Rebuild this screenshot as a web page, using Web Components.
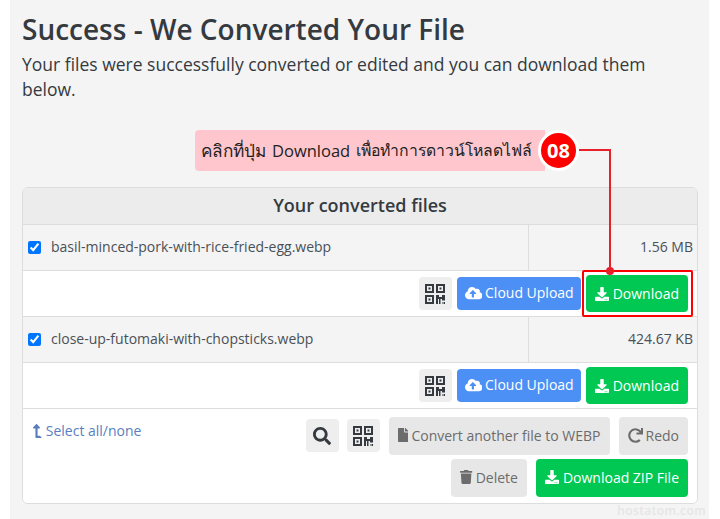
<!DOCTYPE html>
<html lang="en">
<head>
<meta charset="utf-8">
<title>Success - We Converted Your File</title>
<style>
html,body{margin:0;padding:0;background:#fff;}
body{font-family:"Open Sans","Noto Sans",sans-serif;color:#343a40;}
x-callout .th1{font-size:17.2px}
x-callout .en{font-weight:400;font-size:16.5px;margin:0 6px}
x-callout .th2{font-size:15.8px}
</style>
</head>
<body>
<x-page>
  <h-title slot="head" heading="Success - We Converted Your File">Your files were successfully converted or edited and you can download them below.</h-title>
  <x-callout slot="head" number="08"><span class="th1">คลิกที่ปุ่ม</span><span class="en">Download</span><span class="th2">เพื่อทำการดาวน์โหลดไฟล์</span></x-callout>
  <x-card heading="Your converted files">
    <x-file name="basil-minced-pork-with-rice-fried-egg.webp" size="1.56 MB"></x-file>
    <x-file name="close-up-futomaki-with-chopsticks.webp" size="424.67 KB"></x-file>
    <x-card-foot></x-card-foot>
  </x-card>
</x-page>
<script>
const ICONS={
 download:['0 0 512 512','M216 0h80c13.3 0 24 10.7 24 24v168h87.7c17.8 0 26.7 21.5 14.1 34.1L269.7 378.3c-7.5 7.5-19.8 7.5-27.3 0L90.1 226.1c-12.6-12.6-3.7-34.1 14.1-34.1H192V24c0-13.3 10.7-24 24-24zm296 376v112c0 13.3-10.7 24-24 24H24c-13.3 0-24-10.7-24-24V376c0-13.3 10.7-24 24-24h146.7l49 49c20.1 20.1 52.5 20.1 72.6 0l49-49H488c13.3 0 24 10.7 24 24zm-124 88c0-11-9-20-20-20s-20 9-20 20 9 20 20 20 20-9 20-20zm64 0c0-11-9-20-20-20s-20 9-20 20 9 20 20 20 20-9 20-20z'],
 cloud:['0 0 640 512','M537.6 226.6c4.1-10.7 6.4-22.4 6.4-34.6 0-53-43-96-96-96-19.7 0-38.1 6-53.3 16.2C367 64.2 315.3 32 256 32c-88.4 0-160 71.6-160 160 0 2.7.1 5.4.2 8.1C40.2 219.8 0 273.2 0 336c0 79.5 64.5 144 144 144h368c70.7 0 128-57.3 128-128 0-61.9-44-113.6-102.4-125.4zM393.4 288H328v112c0 8.8-7.2 16-16 16h-48c-8.8 0-16-7.2-16-16V288h-65.4c-14.3 0-21.4-17.2-11.3-27.3l105.4-105.4c6.2-6.2 16.4-6.2 22.6 0l105.4 105.4c10.1 10.1 2.9 27.3-11.3 27.3z'],
 search:['0 0 512 512','M505 442.7L405.3 343c-4.5-4.5-10.6-7-17-7H372c27.6-35.3 44-79.7 44-128C416 93.1 322.9 0 208 0S0 93.1 0 208s93.1 208 208 208c48.3 0 92.7-16.4 128-44v16.3c0 6.4 2.5 12.5 7 17l99.7 99.7c9.4 9.4 24.6 9.4 33.9 0l28.3-28.3c9.4-9.4 9.4-24.6.1-34zM208 336c-70.7 0-128-57.2-128-128 0-70.7 57.2-128 128-128 70.7 0 128 57.2 128 128 0 70.7-57.2 128-128 128z'],
 file:['0 0 384 512','M224 136V0H24C10.7 0 0 10.7 0 24v464c0 13.3 10.7 24 24 24h336c13.3 0 24-10.7 24-24V160H248c-13.2 0-24-10.8-24-24zm160-14.1v6.1H256V0h6.1c6.4 0 12.5 2.5 17 7l97.9 98c4.5 4.5 7 10.6 7 16.9z'],
 trash:['0 0 448 512','M432 32H312l-9.4-18.7A24 24 0 0 0 281.1 0H166.8a23.72 23.72 0 0 0-21.4 13.3L136 32H16A16 16 0 0 0 0 48v32a16 16 0 0 0 16 16h416a16 16 0 0 0 16-16V48a16 16 0 0 0-16-16zM53.2 467a48 48 0 0 0 47.9 45h245.8a48 48 0 0 0 47.9-45L416 128H32z'],
 redo:['0 0 512 512','M500.33 0h-47.41a12 12 0 0 0-12 12.57l4 82.76A247.42 247.42 0 0 0 256 8C119.34 8 7.9 119.53 8 256.19 8.1 393.07 119.1 504 256 504a247.1 247.1 0 0 0 166.18-63.91 12 12 0 0 0 .48-17.43l-34-34a12 12 0 0 0-16.38-.55A176 176 0 1 1 402.1 157.8l-101.53-4.87a12 12 0 0 0-12.57 12v47.41a12 12 0 0 0 12 12h200.33a12 12 0 0 0 12-12V12a12 12 0 0 0-12-12z'],
 qr:['0 0 20 20','M0 0h9v9H0zM2 2v5h5V2zM3.5 3.5h2v2h-2zM11 0h9v9h-9zM13 2v5h5V2zM14.5 3.5h2v2h-2zM0 11h9v9H0zM2 13v5h5v-5zM3.5 14.5h2v2h-2zM11 11h3v2h3v-2h3v5.5h-3V15h-1.500v5H14v-5h-1v5h-2zM17.500 18h1v2h-1zM19 18h1v2h-1z'],
 level:['0 0 320 512','M313.553 119.669L209.587 7.666c-9.485-10.214-25.676-10.229-35.174 0L70.438 119.669C56.232 134.969 67.062 160 88.025 160H152v272H68.024a11.996 11.996 0 0 0-8.485 3.515l-56 56C-4.021 499.074 1.333 512 12.024 512H208c13.255 0 24-10.745 24-24V160h63.966c20.878 0 31.851-24.969 17.587-40.331z']
};
function svg(name,h,extra){
 const [vb,d]=ICONS[name];const p=vb.split(' ');
 const w=h*p[2]/p[3];
 return `<svg width="${w}" height="${h}" viewBox="${vb}" fill="currentColor" fill-rule="evenodd" aria-hidden="true" style="display:block;flex:none;${extra||''}"><path d="${d}"/></svg>`;
}
class Base extends HTMLElement{
 render(html){ if(!this.shadowRoot) this.attachShadow({mode:'open'}); this.shadowRoot.innerHTML=html; }
}
customElements.define('x-page',class extends Base{connectedCallback(){this.render(`<style>
 :host{display:flex;flex-direction:column;position:relative;box-sizing:border-box;width:699px;height:519px;margin-left:10px;padding:0 12px;background:#f4f4f4;overflow:hidden}
 .box{position:absolute;left:572px;top:270px;width:107px;height:43px;border:2px solid #f00;border-radius:2px}
 .v{position:absolute;left:599px;top:149px;width:2px;height:121px;background:#e8202a}
 .h{position:absolute;left:569px;top:149px;width:32px;height:2px;background:#e8202a}
 .dot{position:absolute;left:596px;top:267px;width:8px;height:8px;border-radius:50%;background:#e8202a}
 .mark{position:absolute;right:3px;top:502px;font:600 12px "Open Sans",sans-serif;letter-spacing:.4px;color:#e6e6e6}
</style><slot name="head"></slot><slot></slot>
<div class="h"></div><div class="v"></div><div class="box"></div><div class="dot"></div><div class="mark">hostatom.com</div>`)}});
customElements.define('h-title',class extends Base{connectedCallback(){this.render(`<style>
 :host{display:block}
 h1{margin:13px 0 7px;font:600 28px/32px "Open Sans",sans-serif;color:#343a40}
 p{margin:0;font:400 17.5px/25px "Open Sans",sans-serif;color:#343a40}
</style><h1>${this.getAttribute('heading')}</h1><p><slot></slot></p>`)}});
customElements.define('x-callout',class extends Base{connectedCallback(){this.render(`<style>
 :host{display:flex;align-items:center;position:relative;box-sizing:border-box;align-self:flex-start;height:41px;margin:28px 0 16px 173px;width:350px;padding-left:6px;background:#ffc7cd;border-radius:4px 0 0 4px;font:400 16.5px/41px "Open Sans","Noto Sans","DejaVu Sans",sans-serif;color:#222;white-space:nowrap}
 .n{position:absolute;left:343px;top:0;box-sizing:border-box;width:41px;height:41px;border:3px solid #fff;border-radius:50%;background:#f00;color:#fff;font:700 20px/35px "Open Sans",sans-serif;text-align:center}
</style><slot></slot><div class="n">${this.getAttribute('number')}</div>`)}});
customElements.define('x-card',class extends Base{connectedCallback(){this.render(`<style>
 :host{display:block;box-sizing:border-box;width:676px;border:1px solid #ddd;border-radius:6px;background:#fff;overflow:hidden}
 .t{height:36px;border-bottom:1px solid #ddd;background:#ececec;text-align:center;font:600 18px/35px "Open Sans",sans-serif;color:#343a40}
</style><div class="t">${this.getAttribute('heading')}</div><slot></slot>`)}});
customElements.define('x-file',class extends Base{connectedCallback(){this.render(`<style>
 :host{display:block;font:400 14px "Open Sans",sans-serif;color:#495057}
 .r{display:flex;height:45px;background:#f4f4f4;border-bottom:1px solid #ddd;align-items:stretch}
 .n{width:500px;display:flex;align-items:center;padding-left:5px;gap:10px;border-right:1px solid #ddd}
 .n span{margin-top:-2px}
 input{margin:0;width:13px;height:13px;accent-color:#0075ff}
 .s{flex:1;display:flex;align-items:center;justify-content:flex-end;padding-right:4px}
 .s span{margin-top:-2px}
 .a{display:flex;height:45px;justify-content:flex-end;align-items:center;gap:5px;padding-right:9px;border-bottom:1px solid #ddd;background:#fff}
</style><div class="r"><div class="n"><input type="checkbox" checked><span>${this.getAttribute('name')}</span></div><div class="s"><span>${this.getAttribute('size')}</span></div></div>
<div class="a"><x-btn kind="icon" icon="qr"></x-btn><x-btn kind="blue" icon="cloud">Cloud Upload</x-btn><x-btn kind="green" icon="download">Download</x-btn></div>`)}});
customElements.define('x-btn',class extends Base{connectedCallback(){
 const k=this.getAttribute('kind'),i=this.getAttribute('icon');
 const sizes={cloud:14,qr:20,search:18,download:14,file:14,trash:14,redo:15};
 const st={
  icon:'height:33px;width:33px;justify-content:center;background:#eee;color:#343a40;',
  blue:'height:33px;padding:0 7px 2px 8px;background:#4d90f5;color:#fff;',
  green:'height:37px;padding:0 9px;gap:4px;background:#00c853;color:#fff;',
  gray:'height:38px;padding:0 9px 2px;background:#e7e7e7;color:#6c6c6c;',
  zip:'height:38px;padding:0 9px 2px;gap:4px;background:#00c853;color:#fff;'}[k];
 this.render(`<style>
 :host{display:inline-flex;flex:none}
 .b{display:flex;align-items:center;gap:3px;box-sizing:border-box;border-radius:4px;font:400 14px "Open Sans",sans-serif;white-space:nowrap;${st}}
</style><div class="b">${svg(i,sizes[i])}<slot></slot></div>`)}});
customElements.define('x-card-foot',class extends Base{connectedCallback(){this.render(`<style>
 :host{display:flex;height:94px;box-sizing:border-box;padding:8px 9px 0 10px;background:#fff;justify-content:space-between}
 .l{display:flex;align-items:center;gap:4px;height:27px;color:#5a7fc0;font:400 14px "Open Sans",sans-serif}
 .rt{display:flex;flex-wrap:wrap;align-content:flex-start;justify-content:flex-end;gap:4px 9px;width:383px}
 .sm{display:flex;gap:8px;padding-top:2px}
</style><div class="l">${svg('level',14,'transform:scaleX(-1)')}<span>Select all/none</span></div>
<div class="rt"><div class="sm"><x-btn kind="icon" icon="search"></x-btn><x-btn kind="icon" icon="qr"></x-btn></div>
<x-btn kind="gray" icon="file">Convert another file to WEBP</x-btn><x-btn kind="gray" icon="redo">Redo</x-btn><x-btn kind="gray" icon="trash">Delete</x-btn><x-btn kind="zip" icon="download">Download ZIP File</x-btn></div>`)}});
</script>
</body>
</html>
